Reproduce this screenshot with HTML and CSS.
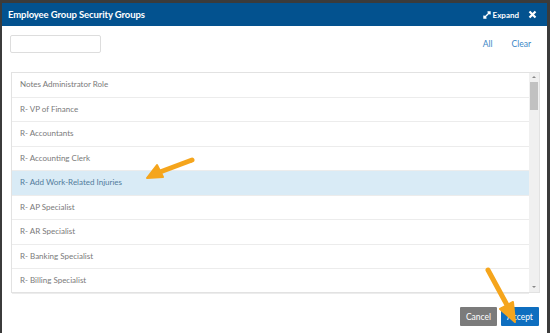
FILE: index.html
```html
<!DOCTYPE html>
<html lang="en">
<head>
    <meta charset="UTF-8">
    <title>Employee Group Security Groups</title>
    <link rel="stylesheet" href="styles.css">
</head>
<body>
    <div class="dialog">
        <div class="dialog-header">
            <span class="dialog-title">Employee Group Security Groups</span>
            <div class="header-actions">
                <span class="expand">
                    <svg width="8" height="8" viewBox="0 0 8 8"><path d="M1 7 L7 1 M4.5 1 H7 V3.5 M1 4.5 V7 H3.5" stroke="#fff" stroke-width="1.4" fill="none"/></svg>
                    Expand
                </span>
                <span class="close">
                    <svg width="9" height="9" viewBox="0 0 9 9"><path d="M1.5 1.5 L7.5 7.5 M7.5 1.5 L1.5 7.5" stroke="#fff" stroke-width="2.2"/></svg>
                </span>
            </div>
        </div>

        <div class="dialog-body">
            <div class="toolbar">
                <input class="search" type="text">
                <div class="links">
                    <a class="link">All</a>
                    <a class="link">Clear</a>
                </div>
            </div>

            <div class="list">
                <div class="rows">
                    <div class="row">Notes Administrator Role</div>
                    <div class="row">R- VP of Finance</div>
                    <div class="row">R- Accountants</div>
                    <div class="row">R- Accounting Clerk</div>
                    <div class="row selected">R- Add Work-Related Injuries</div>
                    <div class="row">R- AP Specialist</div>
                    <div class="row">R- AR Specialist</div>
                    <div class="row">R- Banking Specialist</div>
                    <div class="row">R- Billing Specialist</div>
                </div>
                <div class="scrollbar">
                    <div class="scroll-btn up"></div>
                    <div class="scroll-track"><div class="scroll-thumb"></div></div>
                    <div class="scroll-btn down"></div>
                </div>
            </div>

            <div class="footer">
                <button class="btn btn-cancel">Cancel</button>
                <button class="btn btn-accept">Accept</button>
            </div>
        </div>
    </div>

    <!-- callout arrows drawn over the dialog -->
    <svg class="callout" width="550" height="333" viewBox="0 0 550 333">
        <g fill="#f5a51c" stroke="#f5a51c" stroke-linecap="round" stroke-linejoin="round">
            <path d="M192 160 L160 172" stroke-width="5" fill="none"/>
            <path d="M147 178 L157 165 L163 177 Z" stroke-width="2"/>
            <path d="M488 270 L507 305" stroke-width="5" fill="none"/>
            <path d="M515 322 L500 309 L513 302 Z" stroke-width="2"/>
        </g>
    </svg>
</body>
</html>
```

FILE: styles.css
```css
* {
    margin: 0;
    padding: 0;
    box-sizing: border-box;
}

body {
    width: 550px;
    height: 333px;
    overflow: hidden;
    background: #3b3b3b;
    font-family: Lato, "Open Sans", sans-serif;
    position: relative;
    padding: 3px 3px 0 2px;
}

.dialog {
    height: 330px;
    background: #fff;
    display: flex;
    flex-direction: column;
}

.dialog-header {
    height: 23px;
    background: #03528f;
    color: #fff;
    display: flex;
    align-items: center;
    justify-content: space-between;
    padding: 0 10px 0 6px;
}

.dialog-title {
    font-size: 9.5px;
    font-weight: 700;
    letter-spacing: -0.1px;
}

.header-actions {
    display: flex;
    align-items: center;
    gap: 9px;
}

.expand {
    font-size: 8px;
    font-weight: 700;
    display: flex;
    align-items: center;
    gap: 2px;
}

.close {
    display: flex;
}

.dialog-body {
    flex: 1;
    padding: 9px 7px 0 8px;
    display: flex;
    flex-direction: column;
}

.toolbar {
    display: flex;
    align-items: center;
    justify-content: space-between;
    height: 18px;
}

.search {
    width: 91px;
    height: 18px;
    border: 1px solid #ddd;
    border-radius: 2px;
}

.links {
    display: flex;
    gap: 19px;
    padding-right: 9px;
}

.link {
    font-size: 8.5px;
    color: #3b86c6;
}

.list {
    margin: 19px 0 0 1px;
    height: 221px;
    border: 1px solid #e2e2e2;
    display: flex;
}

.rows {
    flex: 1;
}

.row {
    height: 24.5px;
    line-height: 23.5px;
    border-bottom: 1.5px solid #ececec;
    padding-left: 8px;
    font-size: 8px;
    color: #7a7a7a;
}

.row.selected {
    background: #d9ebf6;
    color: #527c9c;
}

.scrollbar {
    width: 10px;
    background: #f0f0f0;
    display: flex;
    flex-direction: column;
}

.scroll-btn {
    height: 9px;
    position: relative;
}

.scroll-btn::after {
    content: "";
    position: absolute;
    left: 3px;
    border-left: 2px solid transparent;
    border-right: 2px solid transparent;
}

.scroll-btn.up::after {
    top: 3px;
    border-bottom: 2px solid #888;
}

.scroll-btn.down::after {
    top: 3px;
    border-top: 2px solid #888;
}

.scroll-track {
    flex: 1;
}

.scroll-thumb {
    margin: 0 1px;
    height: 28px;
    background: #c1c1c1;
}

.footer {
    display: flex;
    justify-content: flex-end;
    gap: 4px;
    margin-top: 14px;
    padding-right: 1px;
}

.btn {
    height: 19px;
    border: none;
    border-radius: 1px;
    color: #fff;
    font-family: Lato, "Open Sans", sans-serif;
    font-size: 8.5px;
}

.btn-cancel {
    width: 37px;
    background: #7b7b7b;
}

.btn-accept {
    width: 38px;
    background: #0e6ebf;
}

.callout {
    position: absolute;
    left: 0;
    top: 0;
    pointer-events: none;
}
```
